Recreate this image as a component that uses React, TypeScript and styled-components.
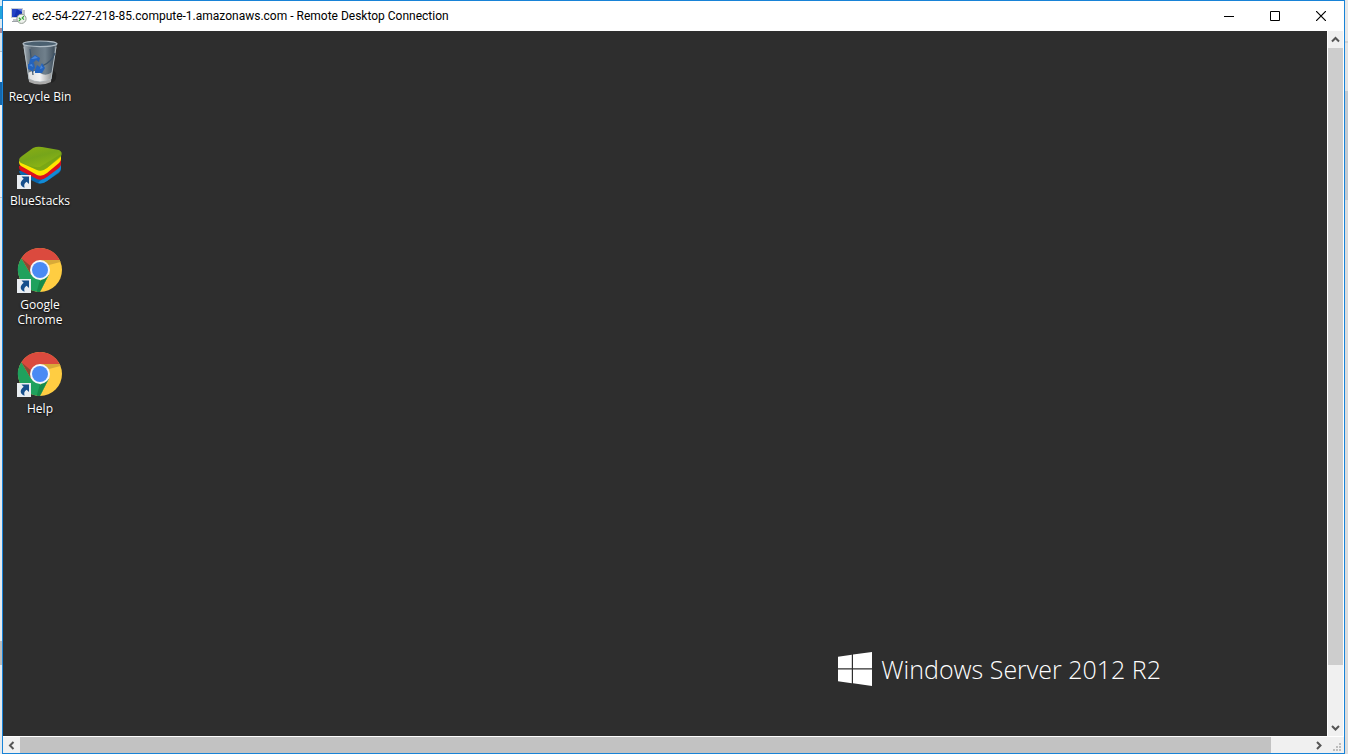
import React from "react";
import styled, { createGlobalStyle } from "styled-components";

const GlobalStyle = createGlobalStyle`
  * { box-sizing: border-box; }
  html, body, #root { height: 100%; margin: 0; }
  body {
    overflow: hidden;
    background: #e3e3e3;
    font-family: "Open Sans", "Noto Sans", sans-serif;
    font-size: 12px;
  }
  button { border: 0; padding: 0; background: transparent; font: inherit; color: inherit; }
`;

const Screen = styled.div`
  display: grid;
  grid-template-columns: 2px minmax(0, 1fr) 3px;
  height: 100%;
`;

const LeftEdge = styled.div`
  background: linear-gradient(
    #d9ebf5 0 6px, #22a4dc 6px 19px, #dce9f2 19px 28px, #a78795 28px 33px,
    #d5e3ee 33px 51px, #b4bac0 51px 52px, #eaf0f5 52px 82px, #1467ad 82px 105px,
    #e9eef3 105px 197px, #c4c4c4 197px 198px, #e4eaf0 198px 641px,
    #bcbcbc 641px 665px, #e3eaf0 665px
  );
`;

const RightEdge = styled.div`
  background: linear-gradient(#e8e8e8 0 41px, #d2d2d2 41px 43px, #e3e3e3 43px 91px, #c4cad0 91px 200px, #dcdcdc 200px);
`;

const Window = styled.main`
  display: flex;
  flex-direction: column;
  min-width: 0;
  border: 1px solid #1883d7;
  background: #fff;
`;

const TitleBar = styled.header`
  display: flex;
  align-items: center;
  flex: 0 0 30px;
  padding-left: 8px;
`;

const Title = styled.h1`
  flex: 1;
  margin: 0 0 0 5px;
  font-family: Roboto, "Open Sans", sans-serif;
  font-size: 12px;
  font-weight: 400;
  line-height: 16px;
  color: #000;
  white-space: nowrap;
`;

const Caption = styled.button`
  display: grid;
  place-items: center;
  width: 46px;
  height: 28px;
`;

const Body = styled.div`
  flex: 1;
  min-height: 0;
  display: grid;
  grid-template: minmax(0, 1fr) 17px / minmax(0, 1fr) 17px;
`;

const Desktop = styled.section`
  display: flex;
  justify-content: space-between;
  align-items: flex-end;
  background: #2e2e2e;
  color: #fff;
`;

const Shortcuts = styled.nav`
  align-self: flex-start;
  display: grid;
  grid-auto-rows: 104px;
  width: 74px;
  padding-top: 8px;
`;

const Shortcut = styled.button`
  display: flex;
  flex-direction: column;
  align-items: center;
  gap: 2px;
  line-height: 15px;
  color: #fff;
  text-shadow: 0 1px 2px #000;
`;

const Brand = styled.div`
  display: flex;
  align-items: center;
  gap: 9px;
  margin: 0 166px 47px 0;
  font-size: 25px;
  font-weight: 300;
  line-height: 40px;
  white-space: nowrap;
`;

const Bar = styled.div<{ $vertical?: boolean }>`
  display: flex;
  flex-direction: ${(p) => (p.$vertical ? "column" : "row")};
  border: 0 solid #fff;
  border-width: ${(p) => (p.$vertical ? "0 1px 0 1px" : "1px 0 0 0")};
  background: #f0f0f0;
`;

const Arrow = styled.button`
  display: grid;
  place-items: center;
  flex: 0 0 17px;
`;

const Track = styled.div<{ $vertical?: boolean }>`
  display: flex;
  flex: 1;
  flex-direction: ${(p) => (p.$vertical ? "column" : "row")};
`;

const Thumb = styled.div<{ $vertical?: boolean }>`
  flex: 0 0 ${(p) => (p.$vertical ? "92%" : "97%")};
  background: ${(p) => (p.$vertical ? "#cdcdcd" : "#c2c2c2")};
`;

const Corner = styled.div`
  display: flex;
  align-items: flex-end;
  justify-content: flex-end;
  padding: 0 3px 2px 0;
  border-top: 1px solid #fff;
  background: #f0f0f0;
`;

const chevrons = {
  up: "M1 6.5 4.5 3 8 6.5",
  down: "M1 3 4.5 6.5 8 3",
  left: "M6.5 1 3 4.5 6.5 8",
  right: "M3 1 6.5 4.5 3 8",
};

function ScrollArrow({ dir }: { dir: keyof typeof chevrons }) {
  return (
    <Arrow aria-label={`Scroll ${dir}`}>
      <svg width="9" height="9" viewBox="0 0 9 9">
        <path d={chevrons[dir]} fill="none" stroke="#555" strokeWidth="2" />
      </svg>
    </Arrow>
  );
}

function RemoteIcon() {
  return (
    <svg width="16" height="16" viewBox="0 0 16 16" aria-hidden="true">
      <path d="M0 0h12v10H0z" fill="#c9ced6" />
      <path d="M1 1h10v8H1z" fill="#1231b4" />
      <path d="M1 1h5L3 9H1z" fill="#2343c5" />
      <path d="M6 1h5v3z" fill="#5475df" />
      <path d="M12 2h2v7h-2zM2 11h6v2H2z" fill="#c2c5c9" />
      <path d="M1 13h7v1H1z" fill="#9ea3a9" />
      <circle cx="10.5" cy="10.8" r="4.6" fill="#eef1ed" stroke="#929b92" />
      <path d="m7.8 9.8 1.8 1.6-1.8 1.8M13 8.2l-1.8 1.8 1.8 1.6" fill="none" stroke="#35a535" strokeWidth="1.2" />
    </svg>
  );
}

function ShortcutArrow() {
  return (
    <g>
      <path d="M1 32h14v14H1z" fill="#e9edf1" />
      <path d="M5.5 33.5H13V41l-2.4-2.2c-2.4 1.5-2.8 3.2-2 6C3.6 43 3.6 39 7.7 35.8z" fill="#164f8c" />
    </g>
  );
}

function RecycleBin() {
  return (
    <svg width="48" height="48" viewBox="0 0 48 48" aria-hidden="true">
      <defs>
        <linearGradient id="glass">
          <stop stopColor="#aab4bc" />
          <stop offset=".25" stopColor="#596773" />
          <stop offset=".65" stopColor="#70808c" />
          <stop offset=".9" stopColor="#465562" />
          <stop offset="1" stopColor="#8c989f" />
        </linearGradient>
        <linearGradient id="foot">
          <stop stopColor="#dedede" />
          <stop offset=".5" stopColor="#f3f3f3" />
          <stop offset="1" stopColor="#929494" />
        </linearGradient>
      </defs>
      <path d="M35 44c4-1 6-4 5-10l-3-3z" fill="#222" />
      <path d="M7 4h34l-6 38q-11 6-22 0z" fill="url(#glass)" />
      <path d="M12 34q6-4 12 0t12-1l-1 9q-11 5-22 0z" fill="url(#foot)" />
      <path d="m8 8 5 32q11 6 22 0l5-32" fill="none" stroke="#b3bdc3" />
      <path d="M13 40q11 6 22 0v3q-11 5-22 0z" fill="#aaa" />
      <ellipse cx="24" cy="4.8" rx="17" ry="2.8" fill="#4b6070" stroke="#b1bdc6" strokeWidth="1.2" />
      <path d="M39 14q-3 9-13 13M14 10l3 26" fill="none" stroke="#3d546b" strokeWidth="1.2" />
      <path d="m14 20 5-4 5 3-1 4-3-2-3 3-4 1zM12 25l6-1 1 5-2 2 1 2-6-3zM19 31l2-5 3 2 2-4 3 5-3 5h-7z" fill="#2363bd" />
      <path d="m15 20 4-3 3 2-5 1zM13 26l3-1 1 3zM25 26l2 3-3 1z" fill="#4d88da" />
    </svg>
  );
}

function BlueStacks() {
  return (
    <svg width="48" height="48" viewBox="0 0 48 48" aria-hidden="true">
      <defs>
        <linearGradient id="leaf" x1="0" y1="0" x2=".5" y2="1">
          <stop stopColor="#8caf12" />
          <stop offset=".5" stopColor="#76a51a" />
          <stop offset="1" stopColor="#91b813" />
        </linearGradient>
      </defs>
      <g transform="translate(0 1)">
        <path d="m3 27 42-9v7q0 2-2 4L31 37q-5 4-10 2L5 31q-2-2-2-4z" fill="#0866ad" />
        <path d="m24 37 21-16v3q0 2-2 4L31 37q-4 3-9 2z" fill="#128bd5" />
        <path d="m3 22 42-8v6q0 2-2 4L31 33q-5 4-10 2L5 27q-2-1-2-5z" fill="#dc101d" />
        <path d="m3 17 42-5v3q0 2-2 4L31 29q-5 4-10 2L5 22q-2-1-2-5z" fill="#ffe600" />
        <path d="M3 16q0-2 3-4l11-8q4-2 9-1l17 3q4 2 2 6L31 24q-5 4-10 2L5 19q-2-1-2-3z" fill="url(#leaf)" />
        <path d="m24 23 21-13q1 2-1 4L31 24q-5 4-10 2L5 18q10 6 19 5z" fill="#659817" opacity=".45" />
      </g>
      <ShortcutArrow />
    </svg>
  );
}

function Chrome() {
  return (
    <svg width="48" height="48" viewBox="0 0 48 48" aria-hidden="true">
      <circle cx="24" cy="23" r="22" fill="#ffcd42" />
      <path d="M24 13h19.6A22 22 0 0 0 5.4 11.2L15.3 28z" fill="#db4a3e" />
      <path d="M5.4 11.2A22 22 0 0 0 24 45l8.7-17H15.3z" fill="#1fa15d" />
      <path d="m24 33 8.7-5L24 45z" fill="#ffcd42" />
      <path d="M24 13h19.6l.8 2L33 18z" fill="#d9aa38" />
      <path d="m5.4 11.2 9.9 16.8-.8-9z" fill="#8b4b32" />
      <path d="m24 45 8.7-17-9 6-3 10.7z" fill="#168b4a" />
      <circle cx="24" cy="23" r="10" fill="#f5f7fa" />
      <circle cx="24" cy="23" r="8" fill="#4a8af4" />
      <ShortcutArrow />
    </svg>
  );
}

const shortcuts = [
  { label: "Recycle Bin", Icon: RecycleBin },
  { label: "BlueStacks", Icon: BlueStacks },
  { label: "Google Chrome", Icon: Chrome },
  { label: "Help", Icon: Chrome },
];

export default function App() {
  return (
    <Screen>
      <GlobalStyle />
      <LeftEdge />
      <Window>
        <TitleBar>
          <RemoteIcon />
          <Title>ec2-54-227-218-85.compute-1.amazonaws.com - Remote Desktop Connection</Title>
          <Caption aria-label="Minimize">
            <svg width="10" height="10"><path d="M0 5h10v1H0z" /></svg>
          </Caption>
          <Caption aria-label="Maximize">
            <svg width="10" height="10"><path d="M.5.5h9v9h-9z" fill="none" stroke="#000" /></svg>
          </Caption>
          <Caption aria-label="Close">
            <svg width="10" height="10"><path d="m0 0 10 10m0-10-10 10" fill="none" stroke="#000" strokeWidth="1.2" /></svg>
          </Caption>
        </TitleBar>
        <Body>
          <Desktop>
            <Shortcuts aria-label="Desktop shortcuts">
              {shortcuts.map(({ label, Icon }) => (
                <Shortcut key={label}>
                  <Icon />
                  <span>{label}</span>
                </Shortcut>
              ))}
            </Shortcuts>
            <Brand>
              <svg width="34" height="34" viewBox="0 0 34 34" fill="#fff" aria-hidden="true">
                <path d="M0 4.7 13.8 2.8v13.5H0zM15 2.6 34 0v16.3H15zM0 17.4h13.8v13.8L0 29.3zM15 17.4h19V34l-19-2.7z" />
              </svg>
              <span>Windows Server 2012 R2</span>
            </Brand>
          </Desktop>
          <Bar $vertical>
            <ScrollArrow dir="up" />
            <Track $vertical><Thumb $vertical /></Track>
            <ScrollArrow dir="down" />
          </Bar>
          <Bar>
            <ScrollArrow dir="left" />
            <Track><Thumb /></Track>
            <ScrollArrow dir="right" />
          </Bar>
          <Corner>
            <svg width="8" height="8" viewBox="0 0 8 8" fill="#bdbdbd" aria-hidden="true">
              <path d="M6 0h2v2H6zM3 3h2v2H3zM6 3h2v2H6zM0 6h2v2H0zM3 6h2v2H3zM6 6h2v2H6z" />
            </svg>
          </Corner>
        </Body>
      </Window>
      <RightEdge />
    </Screen>
  );
}
